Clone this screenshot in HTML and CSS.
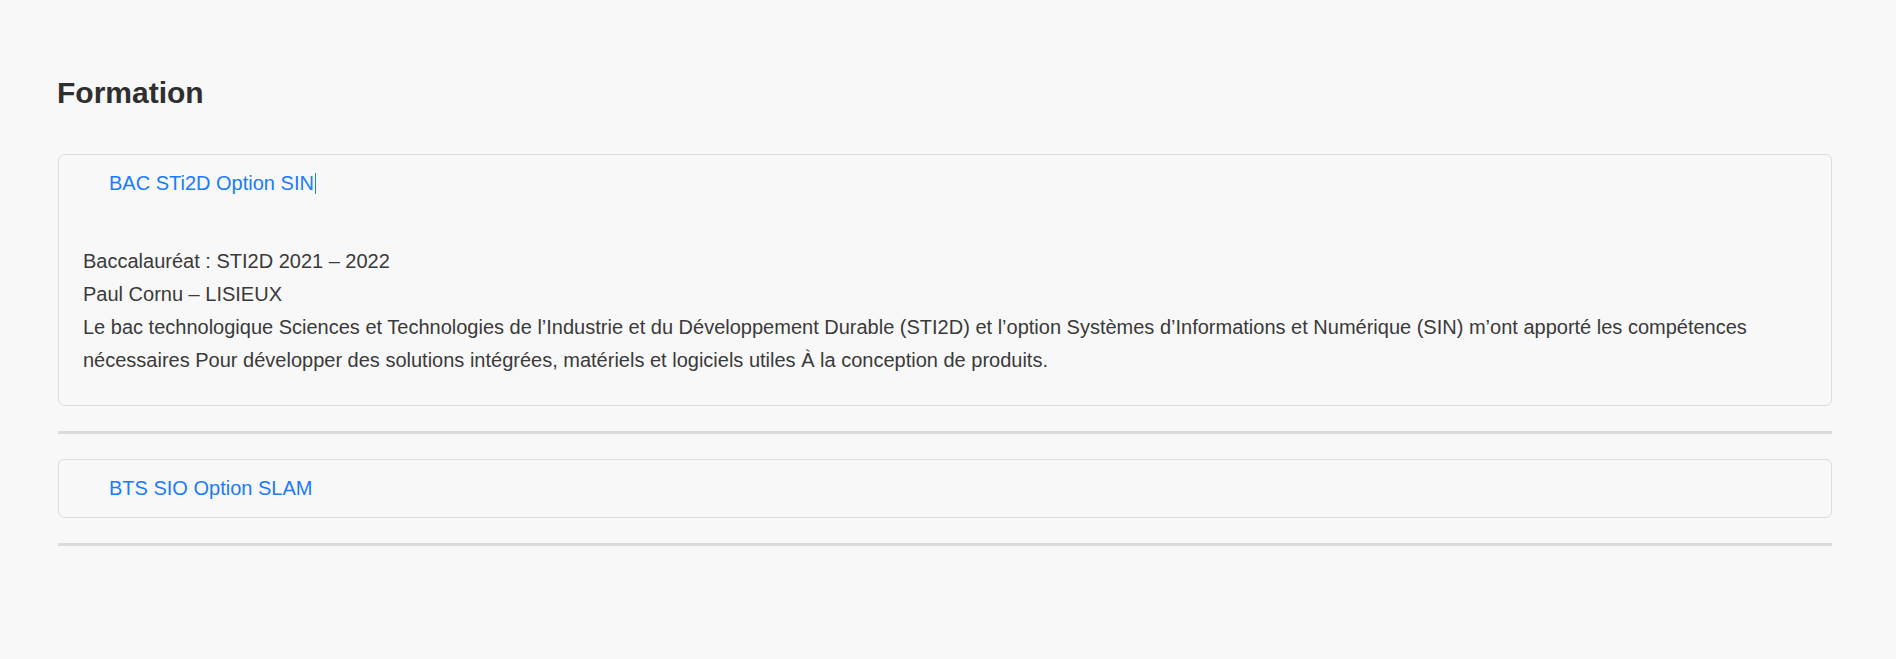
FILE: index.html
```html
<!DOCTYPE html>
<html lang="fr">
<head>
<meta charset="utf-8">
<title>Formation</title>
<link rel="stylesheet" href="styles.css">
</head>
<body>
<main class="page">
  <h2 class="section-title">Formation</h2>

  <div class="card">
    <div class="card-head"><a class="card-link" href="#">BAC STi2D Option SIN</a><span class="caret"></span></div>
    <div class="card-body">
      <p>Baccalauréat : STI2D 2021 – 2022<br>
      Paul Cornu – LISIEUX<br>
      Le bac technologique Sciences et Technologies de l’Industrie et du Développement Durable (STI2D) et l’option Systèmes d’Informations et Numérique (SIN) m’ont apporté les compétences nécessaires Pour développer des solutions intégrées, matériels et logiciels utiles À la conception de produits.</p>
    </div>
  </div>
  <div class="divider"></div>

  <div class="card">
    <div class="card-head"><a class="card-link" href="#">BTS SIO Option SLAM</a></div>
  </div>
  <div class="divider"></div>
</main>
</body>
</html>
```

FILE: styles.css
```css
html, body {
  margin: 0;
  padding: 0;
  background: #f8f8f8;
}

body {
  font-family: "Liberation Sans", Arial, sans-serif;
  color: #333333;
}

.page {
  padding: 75px 64px 40px 57px;
}

.section-title {
  margin: 0 0 43px 0;
  font-size: 30px;
  line-height: 36px;
  font-weight: 700;
  color: #2f2f2f;
}

.card {
  border: 1px solid #dddddd;
  border-radius: 6px;
  margin-left: 1px;
}

.card-head {
  padding: 16px 0 17px 50px;
  font-size: 20px;
  line-height: 24px;
  display: flex;
  align-items: center;
}

.card-link {
  color: #1a7bff;
  text-decoration: none;
}

.caret {
  display: inline-block;
  width: 1px;
  height: 21px;
  margin-left: 1px;
  background: #1a7bff;
}

.card-body {
  padding: 33px 25px 28px 24px;
}

.card-body p {
  margin: 0;
  font-size: 20px;
  line-height: 33px;
  color: #3a3a3a;
}

.divider {
  height: 3px;
  background: #dcdcdc;
  margin: 25px 0 25px 1px;
}
```
